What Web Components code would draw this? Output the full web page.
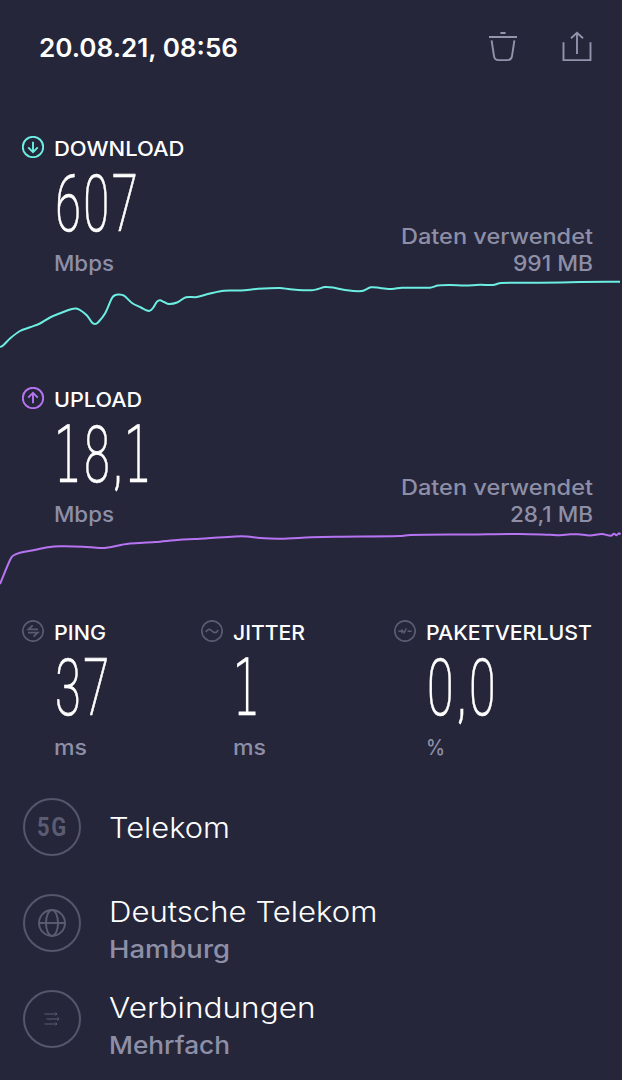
<!DOCTYPE html>
<html lang="de">
<head>
<meta charset="utf-8">
<title>Speedtest</title>
<style>
  body {
    background: #25263a;
    margin: 0;
  }
</style>
</head>
<body>
<st-result></st-result>

<script>
// Single line of text, stretched to a set width
class StText extends HTMLElement {
  constructor() {
    super();
    this.attachShadow( {mode: 'open'} );
    this.shadowRoot.innerHTML = `
      <style>
        :host {
          display: block;
          white-space: nowrap;
        }

        span {
          display: inline-block;
          transform-origin: 0 50%;
          vertical-align: top;
        }
      </style>
      <span><slot></slot></span>
    `;
    this.$span = this.shadowRoot.querySelector( 'span' );
  }

  connectedCallback() {
    const width = parseFloat( this.getAttribute( 'width' ) );
    if( !width ) return;
    const natural = this.$span.getBoundingClientRect().width;
    this.style.width = `${width}px`;
    this.$span.style.transform = `scaleX( ${width / natural} )`;
  }
}

class StIcon extends HTMLElement {
  constructor() {
    super();
    this.attachShadow( {mode: 'open'} );
  }

  connectedCallback() {
    const icons = {
      trash: `<svg width="30" height="32" viewBox="0 0 30 32"><path d="M1 6.100h28M12.400 2h5.200" stroke-width="2"/><path d="M3.600 9.300l2.400 15.800q.6 4 4.600 4h8.800q4 0 4.600-4l2.400-15.800"/></svg>`,
      share: `<svg width="30" height="32" viewBox="0 0 30 32"><path d="M1.500 11.200v17.900h27v-17.900M15 23V2M9 7.200l6-5.400 6 5.400"/></svg>`,
      down: `<svg width="22" height="22" viewBox="0 0 22 22"><circle cx="11" cy="11" r="10.200"/><path d="M11 5.800v10M6.200 11.300l4.800 4.800 4.800-4.800"/></svg>`,
      up: `<svg width="22" height="22" viewBox="0 0 22 22"><circle cx="11" cy="11" r="10.200"/><path d="M11 16.200v-10M6.200 10.700l4.800-4.800 4.800 4.800"/></svg>`,
      ping: `<svg width="22" height="22" viewBox="0 0 22 22"><circle cx="11" cy="11" r="10.200" stroke-width="1.700"/><path d="M16 9.300H6.500l4.200-4M6 12.700h9.800l-4.300 4" stroke-width="1.800"/></svg>`,
      jitter: `<svg width="22" height="22" viewBox="0 0 22 22"><circle cx="11" cy="11" r="10.200" stroke-width="1.700"/><path d="M4.800 12.200c2-4 4.200-3.300 6.200-1.200s4.200 2.800 6.200-1.200" stroke-width="1.700"/></svg>`,
      loss: `<svg width="22" height="22" viewBox="0 0 22 22"><circle cx="11" cy="11" r="10.200" stroke-width="1.700"/><path d="M4.300 11.200h4.600M9.800 13.600l2.600-5.200M13.600 11.200h4M7.400 9.500l1.900 1.700-1.900 1.700" stroke-width="1.400"/></svg>`,
      globe: `<svg width="28" height="28" viewBox="0 0 28 28"><circle cx="14" cy="14" r="13"/><ellipse cx="14" cy="14" rx="6" ry="13"/><path d="M1 14h26"/></svg>`,
      arrows: `<svg width="16" height="16" viewBox="0 0 16 16"><g stroke-width="1"><path d="M.5 3H12M2.500 8H14M.5 13H12"/><path d="M11.500 1.400L13 3l-1.500 1.600M13.500 6.400L15 8l-1.500 1.600M11.500 11.400L13 13l-1.500 1.600"/></g></svg>`
    };

    this.shadowRoot.innerHTML = `
      <style>
        :host {
          display: block;
        }

        svg {
          display: block;
          fill: none;
          stroke: currentColor;
          stroke-width: 1.9;
        }
      </style>
      ${icons[this.getAttribute( 'name' )]}
    `;
  }
}

class StHeader extends HTMLElement {
  constructor() {
    super();
    this.attachShadow( {mode: 'open'} );
    this.shadowRoot.innerHTML = `
      <style>
        :host {
          align-items: center;
          box-sizing: border-box;
          color: #9394ac;
          display: flex;
          gap: 44px;
          height: 94px;
          margin-bottom: 1px;
          padding: 0 30px 0 38.500px;
        }

        st-text {
          color: #ffffff;
          font-size: 25.500px;
          font-weight: 600;
          line-height: 32px;
          margin-right: auto;
          padding-top: 1px;
        }
      </style>
      <st-text width="199">20.08.21, 08:56</st-text>
      <st-icon name="trash"></st-icon>
      <st-icon name="share"></st-icon>
    `;
  }
}

class StMetric extends HTMLElement {
  constructor() {
    super();
    this.attachShadow( {mode: 'open'} );
    this.shadowRoot.innerHTML = `
      <style>
        :host {
          display: grid;
          grid-template-columns: 22px auto;
          grid-template-rows: 24px 84px 38px;
          column-gap: 10px;
        }

        st-icon {
          color: var( --accent, #5b5c72 );
        }

        slot {
          display: block;
          grid-column: 2;
          white-space: nowrap;
        }

        slot[name=label] {
          color: #ffffff;
          font-size: 20.300px;
          font-weight: 550;
          line-height: 25px;
        }

        slot[name=value] {
          color: #ffffff;
          font-family: Roboto, sans-serif;
          font-size: 80px;
          font-weight: 200;
          letter-spacing: 4px;
          line-height: 54px;
          padding: 17px 0 0 .5px;
          -webkit-text-stroke: .7px #ffffff;
        }

        slot[name=unit] {
          color: #8e8fa7;
          font-size: 20.800px;
          font-weight: 500;
          line-height: 39px;
        }
      </style>
      <st-icon></st-icon>
      <slot name="label"></slot>
      <slot name="value"></slot>
      <slot name="unit"></slot>
    `;
  }

  connectedCallback() {
    const icon = document.createElement( 'st-icon' );
    icon.setAttribute( 'name', this.getAttribute( 'icon' ) );
    this.shadowRoot.querySelector( 'st-icon' ).replaceWith( icon );
  }
}

// Smoothed line through a list of points
class StChart extends HTMLElement {
  constructor() {
    super();
    this.attachShadow( {mode: 'open'} );
    this.shadowRoot.innerHTML = `
      <style>
        :host {
          display: block;
          height: 0;
        }

        svg {
          display: block;
          overflow: visible;
        }

        path {
          fill: none;
          stroke: var( --accent );
          stroke-linejoin: round;
          stroke-width: 2;
        }
      </style>
      <svg width="622" height="1"><path></path></svg>
    `;
  }

  connectedCallback() {
    const p = this.getAttribute( 'points' ).trim().split( /\s+/ ).map( ( pair ) => pair.split( ',' ).map( Number ) );
    let d = `M${p[0]}`;
    for( let i = 0; i < p.length - 1; i++ ) {
      const a = p[i - 1] || p[i];
      const b = p[i];
      const c = p[i + 1];
      const e = p[i + 2] || c;
      // Handles keep to the x range of their segment
      const step = ( c[0] - b[0] ) / 3;
      const s1 = c[0] === a[0] ? 0 : ( c[1] - a[1] ) / ( c[0] - a[0] );
      const s2 = e[0] === b[0] ? 0 : ( e[1] - b[1] ) / ( e[0] - b[0] );
      d += `C${b[0] + step},${b[1] + s1 * step} ${c[0] - step},${c[1] - s2 * step} ${c}`;
    }
    const path = this.shadowRoot.querySelector( 'path' );
    path.setAttribute( 'd', d );
    path.setAttribute( 'transform', `translate( 0 ${-this.getAttribute( 'top' )} )` );
  }
}

class StTransfer extends HTMLElement {
  constructor() {
    super();
    this.attachShadow( {mode: 'open'} );
    this.shadowRoot.innerHTML = `
      <style>
        :host {
          display: block;
        }

        div {
          align-items: flex-end;
          display: flex;
          height: 146px;
          justify-content: space-between;
          padding: 0 29.500px 0 22.300px;
        }

        section {
          align-items: flex-end;
          color: #8e8fa7;
          display: flex;
          flex-direction: column;
          font-size: 20.800px;
          font-weight: 500;
          line-height: 27px;
          margin-bottom: 5px;
        }
      </style>
      <div>
        <slot></slot>
        <section><slot name="used"></slot></section>
      </div>
      <slot name="chart"></slot>
    `;
  }
}

class StRow extends HTMLElement {
  constructor() {
    super();
    this.attachShadow( {mode: 'open'} );
    this.shadowRoot.innerHTML = `
      <style>
        :host {
          align-items: center;
          display: flex;
          gap: 28.300px;
          height: 96px;
          padding-left: 23px;
        }

        .badge {
          align-items: center;
          border: 2px solid #55566c;
          border-radius: 50%;
          box-sizing: border-box;
          color: #5b5c72;
          display: flex;
          flex: none;
          height: 58px;
          justify-content: center;
          width: 58px;
        }

        .text {
          color: #ffffff;
          font-size: 28px;
          font-weight: 350;
          line-height: 37px;
          padding-top: 2px;
        }

        slot[name=detail] {
          color: #8e8fa7;
          font-size: 24.200px;
          font-weight: 550;
        }

        slot[name=detail]::slotted( * ) {
          margin-bottom: -13px;
        }
      </style>
      <div class="badge"><slot name="badge"></slot></div>
      <div class="text">
        <slot></slot>
        <slot name="detail"></slot>
      </div>
    `;
  }
}

class StResult extends HTMLElement {
  constructor() {
    super();
    this.attachShadow( {mode: 'open'} );
    this.shadowRoot.innerHTML = `
      <style>
        :host {
          background: #25263a;
          box-sizing: border-box;
          display: flex;
          flex-direction: column;
          font-family: Inter, 'Liberation Sans', sans-serif;
          height: 1080px;
          overflow: hidden;
          width: 622px;
        }

        .download {
          --accent: #6ceee2;
          margin-top: 41px;
        }

        .upload {
          --accent: #b774f2;
          margin-top: 105.400px;
        }

        .stats {
          display: grid;
          grid-template-columns: 179px 193.200px auto;
          margin-top: 87.100px;
          padding-left: 22.300px;
        }

        .rows {
          margin-top: 12.600px;
        }

        /* Footed one */
        i {
          font-family: 'DejaVu Sans Light', 'DejaVu Sans', sans-serif;
          font-size: 78px;
          font-style: normal;
          margin: 0 -1px 0 -3px;
          -webkit-text-stroke-width: .3px;
        }

        /* Decimal comma */
        b {
          font-size: 66px;
          font-weight: 350;
          margin: 0 2px 0 3px;
        }

        .network {
          font-family: Roboto, sans-serif;
          font-size: 25.500px;
          font-weight: 700;
          letter-spacing: 2px;
        }
      </style>
      <st-header></st-header>
      <st-transfer class="download">
        <st-metric icon="down">
          <st-text slot="label" width="130.500">DOWNLOAD</st-text>
          <st-text slot="value" width="85">607</st-text>
          <st-text slot="unit" width="60">Mbps</st-text>
        </st-metric>
        <st-text slot="used" width="192">Daten verwendet</st-text>
        <st-text slot="used" width="80">991 MB</st-text>
        <st-chart slot="chart" top="282" points="0,347 3,345.500 10,338.500 20,331 30,327.300 40,323.500 50,317.500 62,312.500 71,309.200 76,308.500 80,310 87,315.500 92,322.500 95,324 98,322.500 105,313.500 112,298 115,295.200 119,294.500 124,295.700 132,303 141,307.500 147,310.500 150,310.700 153,308 157,301.700 160,300.300 164,302 169,304 177,302.500 186,297.300 197,297 210,293.500 224,290.700 241,290.500 258,288.800 280,288 290,289.200 311,290.300 318,289 325,287 333,287.500 345,290 362,291 371,287.300 380,288 392,289 402,287.700 430,287.700 438,285.500 450,285 465,285.500 480,284.800 493,285 501,283 540,282.700 580,282.100 620,281.700"></st-chart>
      </st-transfer>
      <st-transfer class="upload">
        <st-metric icon="up">
          <st-text slot="label" width="88">UPLOAD</st-text>
          <st-text slot="value" width="99"><i>1</i>8<b>,</b><i>1</i></st-text>
          <st-text slot="unit" width="60">Mbps</st-text>
        </st-metric>
        <st-text slot="used" width="192">Daten verwendet</st-text>
        <st-text slot="used" width="83">28,1 MB</st-text>
        <st-chart slot="chart" top="533" points="0,584 10,560 13,555.700 20,552.700 32,550.500 48,547.300 60,546.300 83,546.700 100,548 108,547.500 122,544.700 130,543.500 155,542 180,539.700 205,538.500 235,536.400 247,536.400 260,538 280,538.700 311,537.300 335,536.700 400,536 410,534.900 470,534.400 520,533.900 550,534.800 560,535.200 570,534.300 578,534.200 590,535.400 602,534.100 611,535.700 614,533.800 616.500,535.200 619,533.200 620.500,534.500"></st-chart>
      </st-transfer>
      <div class="stats">
        <st-metric icon="ping">
          <st-text slot="label" width="52">PING</st-text>
          <st-text slot="value" width="56.500">37</st-text>
          <st-text slot="unit" width="33">ms</st-text>
        </st-metric>
        <st-metric icon="jitter">
          <st-text slot="label" width="72">JITTER</st-text>
          <st-text slot="value" width="28.300"><i>1</i></st-text>
          <st-text slot="unit" width="33">ms</st-text>
        </st-metric>
        <st-metric icon="loss">
          <st-text slot="label" width="166">PAKETVERLUST</st-text>
          <st-text slot="value" width="71">0<b>,</b>0</st-text>
          <st-text slot="unit" width="19">%</st-text>
        </st-metric>
      </div>
      <div class="rows">
        <st-row>
          <st-text slot="badge" width="31" class="network">5G</st-text>
          <st-text width="121">Telekom</st-text>
        </st-row>
        <st-row>
          <st-icon slot="badge" name="globe"></st-icon>
          <st-text width="268.500">Deutsche Telekom</st-text>
          <st-text slot="detail" width="121">Hamburg</st-text>
        </st-row>
        <st-row>
          <st-icon slot="badge" name="arrows"></st-icon>
          <st-text width="206.500">Verbindungen</st-text>
          <st-text slot="detail" width="121">Mehrfach</st-text>
        </st-row>
      </div>
    `;
  }
}

// Containers first, so that text is measured with its final font
window.customElements.define( 'st-icon', StIcon );
window.customElements.define( 'st-header', StHeader );
window.customElements.define( 'st-metric', StMetric );
window.customElements.define( 'st-chart', StChart );
window.customElements.define( 'st-transfer', StTransfer );
window.customElements.define( 'st-row', StRow );
window.customElements.define( 'st-result', StResult );
window.customElements.define( 'st-text', StText );
</script>
</body>
</html>
